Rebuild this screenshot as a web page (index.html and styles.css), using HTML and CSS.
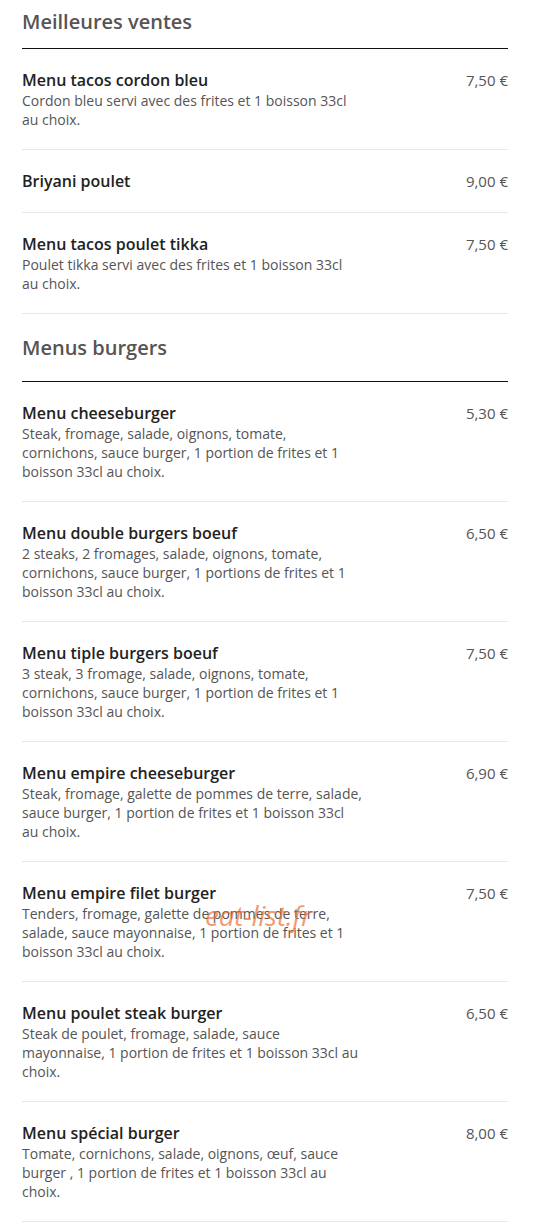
FILE: index.html
```html
<!DOCTYPE html>
<html lang="fr">
<head>
  <meta charset="UTF-8">
  <meta name="viewport" content="width=device-width, initial-scale=1.0">
  <title>Carte</title>
  <link rel="stylesheet" href="styles.css">
</head>
<body>
  <div class="menu">
    <section class="category">
      <h2 class="category-title first">Meilleures ventes</h2>
      <div class="item">
        <div class="item-info">
          <div class="item-name">Menu tacos cordon bleu</div>
          <div class="item-desc">Cordon bleu servi avec des frites et 1 boisson 33cl au choix.</div>
        </div>
        <div class="item-price">7,50 €</div>
      </div>
      <div class="item">
        <div class="item-info">
          <div class="item-name">Briyani poulet</div>
        </div>
        <div class="item-price">9,00 €</div>
      </div>
      <div class="item">
        <div class="item-info">
          <div class="item-name">Menu tacos poulet tikka</div>
          <div class="item-desc">Poulet tikka servi avec des frites et 1 boisson 33cl au choix.</div>
        </div>
        <div class="item-price">7,50 €</div>
      </div>
    </section>

    <section class="category">
      <h2 class="category-title">Menus burgers</h2>
      <div class="item">
        <div class="item-info">
          <div class="item-name">Menu cheeseburger</div>
          <div class="item-desc">Steak, fromage, salade, oignons, tomate, cornichons, sauce burger, 1 portion de frites et 1 boisson 33cl au choix.</div>
        </div>
        <div class="item-price">5,30 €</div>
      </div>
      <div class="item">
        <div class="item-info">
          <div class="item-name">Menu double burgers boeuf</div>
          <div class="item-desc">2 steaks, 2 fromages, salade, oignons, tomate, cornichons, sauce burger, 1 portions de frites et 1 boisson 33cl au choix.</div>
        </div>
        <div class="item-price">6,50 €</div>
      </div>
      <div class="item">
        <div class="item-info">
          <div class="item-name">Menu tiple burgers boeuf</div>
          <div class="item-desc">3 steak, 3 fromage, salade, oignons, tomate, cornichons, sauce burger, 1 portion de frites et 1 boisson 33cl au choix.</div>
        </div>
        <div class="item-price">7,50 €</div>
      </div>
      <div class="item">
        <div class="item-info">
          <div class="item-name">Menu empire cheeseburger</div>
          <div class="item-desc">Steak, fromage, galette de pommes de terre, salade, sauce burger, 1 portion de frites et 1 boisson 33cl au choix.</div>
        </div>
        <div class="item-price">6,90 €</div>
      </div>
      <div class="item">
        <div class="item-info">
          <div class="item-name">Menu empire filet burger</div>
          <div class="item-desc">Tenders, fromage, galette de pommes de terre, salade, sauce mayonnaise, 1 portion de frites et 1 boisson 33cl au choix.</div>
        </div>
        <div class="item-price">7,50 €</div>
        <span class="watermark">eat-list.fr</span>
      </div>
      <div class="item">
        <div class="item-info">
          <div class="item-name">Menu poulet steak burger</div>
          <div class="item-desc">Steak de poulet, fromage, salade, sauce mayonnaise, 1 portion de frites et 1 boisson 33cl au choix.</div>
        </div>
        <div class="item-price">6,50 €</div>
      </div>
      <div class="item">
        <div class="item-info">
          <div class="item-name">Menu spécial burger</div>
          <div class="item-desc">Tomate, cornichons, salade, oignons, œuf, sauce burger , 1 portion de frites et 1 boisson 33cl au choix.</div>
        </div>
        <div class="item-price">8,00 €</div>
      </div>
    </section>
  </div>
</body>
</html>
```

FILE: styles.css
```css
* { box-sizing: border-box; }
body {
  margin: 0;
  background: #fff;
  font-family: "Open Sans", "Liberation Sans", sans-serif;
  color: #555;
}
.menu {
  width: 486px;
  margin-left: 22px;
}
.category-title {
  margin: 20px 0 0;
  padding-bottom: 19px;
  font-size: 20px;
  line-height: 28px;
  font-weight: 600;
  color: #555;
  border-bottom: 1px solid #111;
}
.category-title.first {
  margin-top: 8px;
  padding-bottom: 12px;
}
.item {
  position: relative;
  display: flex;
  justify-content: space-between;
  align-items: flex-start;
  padding: 20px 0;
  border-bottom: 1px solid #e8e8e8;
}
.item-info {
  width: 340px;
}
.item-name {
  font-size: 16px;
  line-height: 22px;
  font-weight: 600;
  color: #222;
}
.item-desc {
  font-size: 14px;
  line-height: 19px;
  color: #555;
}
.item-price {
  font-size: 15px;
  line-height: 22px;
  color: #555;
}
/* site watermark laid over the description */
.watermark {
  position: absolute;
  left: 183px;
  top: 34px;
  font-size: 28px;
  font-style: italic;
  letter-spacing: -0.3px;
  color: rgba(240, 110, 50, 0.7);
  pointer-events: none;
}
```
